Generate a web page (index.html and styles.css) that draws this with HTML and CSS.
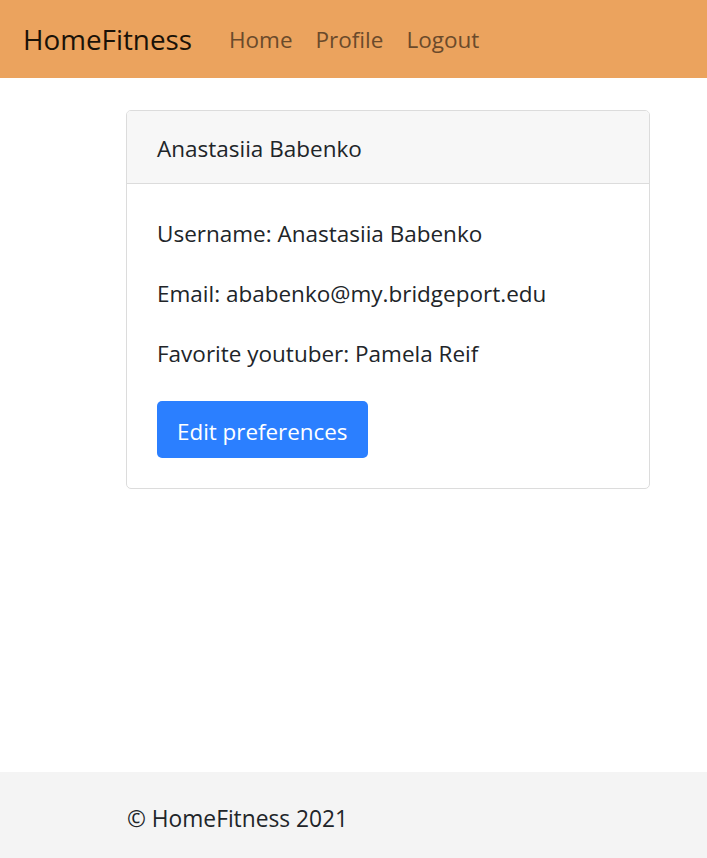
FILE: index.html
```html
<!DOCTYPE html>
<html lang="en">
<head>
<meta charset="utf-8">
<title>HomeFitness - Profile</title>
<link rel="stylesheet" href="styles.css">
</head>
<body>
<div class="page">
  <nav class="navbar">
    <a class="brand" href="#">HomeFitness</a>
    <ul class="nav-links">
      <li><a href="#">Home</a></li>
      <li><a href="#">Profile</a></li>
      <li><a href="#">Logout</a></li>
    </ul>
  </nav>
  <main class="main">
    <div class="card">
      <div class="card-header">Anastasiia Babenko</div>
      <div class="card-body">
        <p class="card-text">Username: Anastasiia Babenko</p>
        <p class="card-text">Email: ababenko@my.bridgeport.edu</p>
        <p class="card-text">Favorite youtuber: Pamela Reif</p>
        <a class="btn" href="#">Edit preferences</a>
      </div>
    </div>
  </main>
  <footer class="footer">
    <span class="footer-text">© HomeFitness 2021</span>
  </footer>
</div>
</body>
</html>
```
FILE: styles.css
```css
* { box-sizing: border-box; }
html, body { margin: 0; padding: 0; }
body {
  font-family: "Open Sans", "Noto Sans", sans-serif;
  font-size: 22.5px;
  color: #212529;
  background: #fff;
}
.page {
  min-height: 858px;
  display: flex;
  flex-direction: column;
}
.navbar {
  height: 78px;
  background: #eba35e;
  display: flex;
  align-items: center;
  padding-left: 23px;
}
.brand {
  font-size: 27.8px;
  color: #1a1208;
  text-decoration: none;
  margin-right: 37px;
}
.nav-links {
  list-style: none;
  margin: 0;
  padding: 0;
  display: flex;
  gap: 23px;
}
.nav-links a {
  color: #6a4a2b;
  text-decoration: none;
  font-size: 22.5px;
}
.main {
  flex: 1;
  padding: 32px 57px 0 126px;
}
.card {
  border: 1px solid #dcdcdc;
  border-radius: 5px;
  overflow: hidden;
}
.card-header {
  background: #f7f7f7;
  border-bottom: 1px solid #dcdcdc;
  height: 73px;
  padding: 3px 30px 0;
  display: flex;
  align-items: center;
}
.card-body {
  padding: 35px 30px 30px;
}
.card-text {
  margin: 0 0 30px;
  line-height: 30px;
}
.btn {
  display: inline-block;
  margin-top: 2px;
  background: #2b7fff;
  color: #fff;
  text-decoration: none;
  font-size: 22.4px;
  line-height: 57px;
  height: 57px;
  padding: 2px 20px 0;
  border-radius: 5px;
}
.footer {
  height: 86px;
  background: #f4f4f4;
  display: flex;
  align-items: center;
  padding: 6px 0 0 127px;
}
.footer-text {
  font-size: 22.75px;
}
```
